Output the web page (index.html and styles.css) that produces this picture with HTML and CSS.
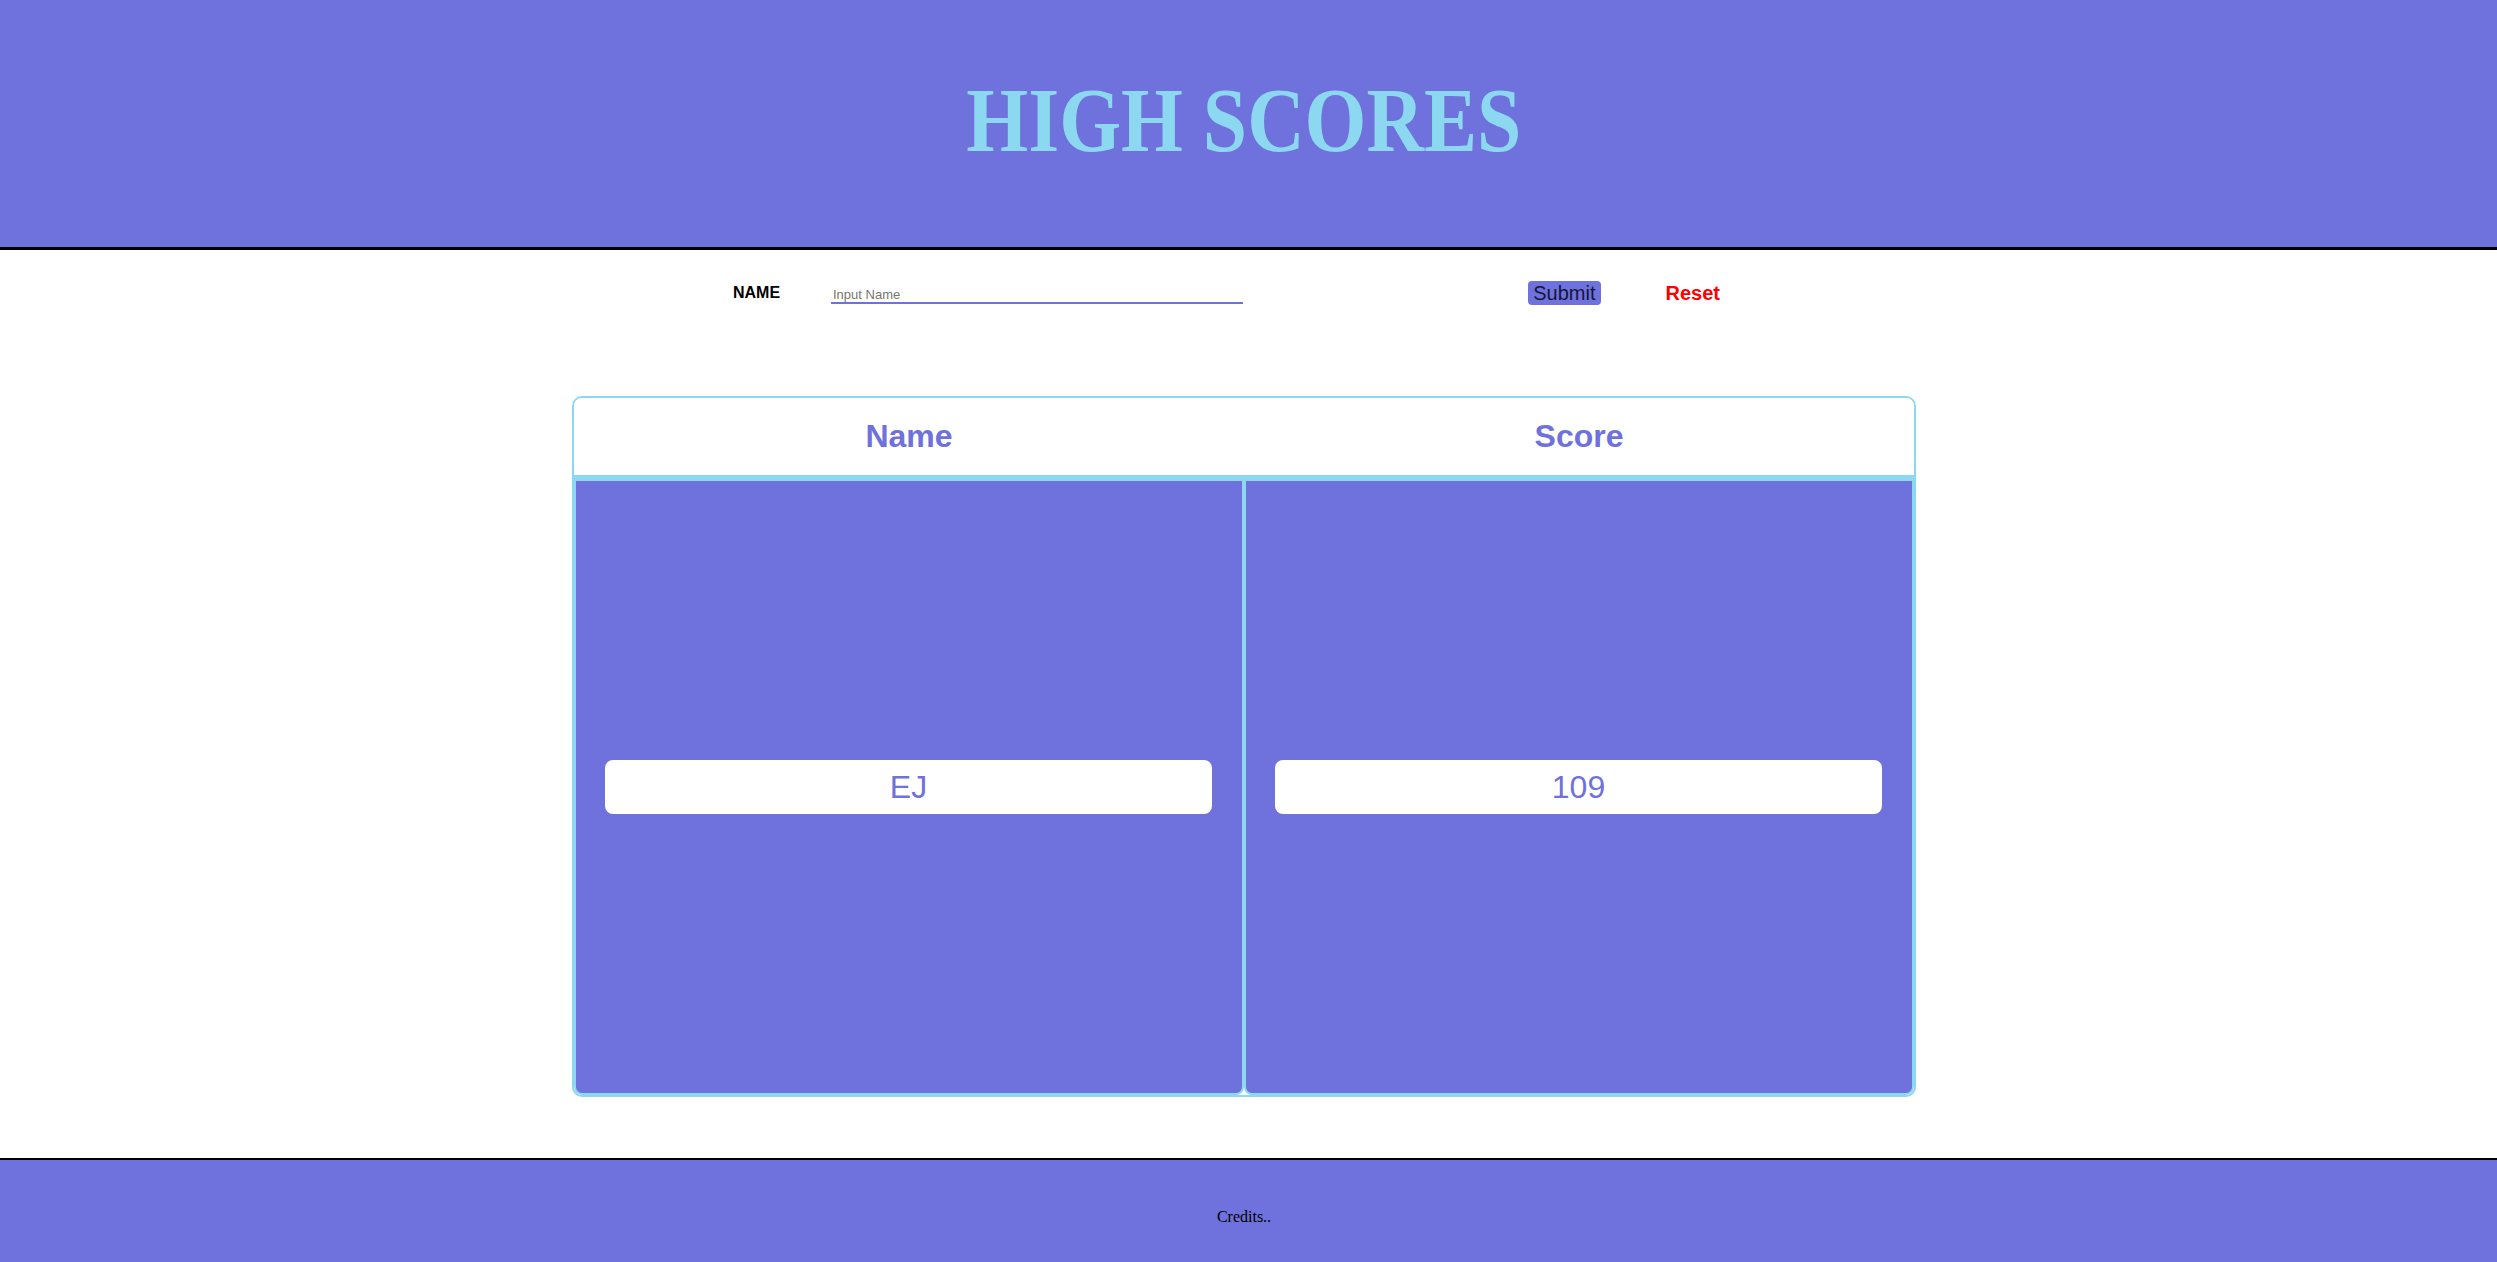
FILE: index.html
```html
<!DOCTYPE html>
<html lang="en">
<head>
<meta charset="utf-8">
<title>High Scores</title>
<link rel="stylesheet" href="styles.css">
</head>
<body>
<header class="top">
  <h1 class="title"><span class="title-text">HIGH SCORES</span></h1>
</header>
<main class="main">
  <form class="entry">
    <label class="entry-label" for="player">NAME</label>
    <input class="entry-input" id="player" type="text" placeholder="Input Name">
    <button class="btn-submit" type="button">Submit</button>
    <button class="btn-reset" type="button">Reset</button>
  </form>
  <section class="board">
    <div class="board-head">
      <div class="head-cell">Name</div>
      <div class="head-cell">Score</div>
    </div>
    <div class="board-body">
      <div class="col"><div class="entry-box">EJ</div></div>
      <div class="col"><div class="entry-box">109</div></div>
    </div>
  </section>
</main>
<footer class="foot">
  <p class="credits">Credits..</p>
</footer>
</body>
</html>
```
FILE: styles.css
```css
html, body {
  margin: 0;
  padding: 0;
}
body {
  background: #ffffff;
  font-family: "Liberation Sans", Arial, sans-serif;
  height: 1262px;
  overflow: hidden;
}
.top {
  height: 247px;
  background: #6f71dd;
  border-bottom: 3px solid #000000;
  display: flex;
  justify-content: center;
  padding-right: 9px;
}
.title {
  margin: 74px 0 0 0;
  font-family: "Liberation Serif", "Times New Roman", serif;
  font-weight: bold;
  font-size: 92px;
  line-height: 1;
  color: #8bd8f0;
}
.title-text {
  display: inline-block;
  transform: scaleX(0.865);
}
.main {
  padding: 31px 9px 0 0;
  height: 877px;
}
.entry {
  width: 987px;
  padding-right: 35px;
  margin: 0 auto;
  height: 24px;
  display: flex;
  align-items: center;
}
.entry-label {
  font-weight: bold;
  font-size: 16px;
  color: #000000;
  width: 46px;
}
.entry-input {
  margin-left: 52px;
  width: 413px;
  box-sizing: border-box;
  height: 22px;
  border: none;
  border-bottom: 2px solid #6f71dd;
  background: transparent;
  font-family: "Liberation Sans", Arial, sans-serif;
  font-size: 13px;
  padding: 4px 2px 0 2px;
  outline: none;
}
.entry-input::placeholder {
  color: #757575;
}
.btn-submit {
  margin-left: 285px;
  height: 24px;
  padding: 0 5px;
  border: none;
  border-radius: 4px;
  background: #6f71dd;
  color: #15153a;
  font-family: "Liberation Sans", Arial, sans-serif;
  font-size: 20px;
  line-height: 24px;
}
.btn-reset {
  margin-left: 65px;
  padding: 0;
  border: none;
  background: transparent;
  color: #ff0000;
  font-family: "Liberation Sans", Arial, sans-serif;
  font-weight: bold;
  font-size: 20px;
}
.board {
  width: 1344px;
  box-sizing: border-box;
  margin: 91px auto 0 auto;
  border: 2px solid #8bd8f0;
  border-radius: 10px;
  overflow: hidden;
}
.board-head {
  height: 77px;
  border-bottom: 4px solid #8bd8f0;
  display: grid;
  grid-template-columns: 1fr 1fr;
  align-items: center;
  background: #ffffff;
}
.head-cell {
  text-align: center;
  font-weight: bold;
  font-size: 32px;
  color: #6f71dd;
}
.board-body {
  height: 616px;
  display: grid;
  grid-template-columns: 1fr 1fr;
}
.col {
  background: #6f71dd;
  border: 2px solid #8bd8f0;
  border-radius: 0 0 8px 8px;
  display: flex;
  align-items: center;
  padding: 0 30px 0 29px;
}
.entry-box {
  flex: 1;
  height: 54px;
  line-height: 54px;
  background: #ffffff;
  border-radius: 8px;
  text-align: center;
  font-size: 32px;
  color: #6f71dd;
}
.foot {
  height: 102px;
  border-top: 2px solid #000000;
  background: #6f71dd;
  display: flex;
  justify-content: center;
  padding-right: 9px;
}
.credits {
  margin: 48px 0 0 0;
  font-family: "Liberation Serif", "Times New Roman", serif;
  font-size: 16px;
  line-height: 18px;
  color: #000000;
}
```
